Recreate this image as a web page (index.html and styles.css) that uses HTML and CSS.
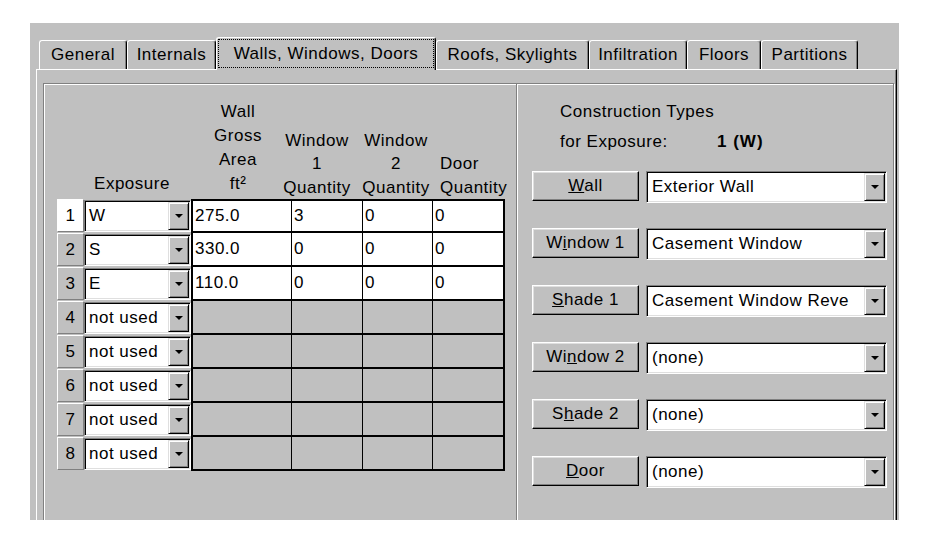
FILE: index.html
```html
<!DOCTYPE html>
<html lang="en">
<head>
  <meta charset="UTF-8" />
  <title>Walls, Windows, Doors</title>
  <link rel="stylesheet" href="styles.css">
</head>
<body>

  <div class="dialog">
    <div class="tabs">
      <div class="tab w-general">General</div>
      <div class="tab w-internals">Internals</div>
      <div class="tab active w-walls"><span class="focus">Walls, Windows, Doors</span></div>
      <div class="tab w-roofs">Roofs, Skylights</div>
      <div class="tab w-infil">Infiltration</div>
      <div class="tab w-floors">Floors</div>
      <div class="tab w-parts">Partitions</div>
    </div>

    <div class="panel">
      <div class="frames">

        <div class="left">
          <div class="heads">
            <div class="h-exp">Exposure</div>
            <div class="h-wall">Wall<br>Gross<br>Area<br>ft²</div>
            <div class="h-win">Window<br>1<br>Quantity</div>
            <div class="h-win h-win2">Window<br>2<br>Quantity</div>
            <div class="h-door">Door<br>Quantity</div>
          </div>

          <div class="grid">
            <div class="row first">
              <div class="num current">1</div>
              <div class="combo small"><span class="val">W</span><span class="drop"></span></div>
              <div class="cell c-wall">275.0</div>
              <div class="cell c-q1">3</div>
              <div class="cell c-q2">0</div>
              <div class="cell c-door">0</div>
            </div>
            <div class="row">
              <div class="num">2</div>
              <div class="combo small"><span class="val">S</span><span class="drop"></span></div>
              <div class="cell c-wall">330.0</div>
              <div class="cell c-q1">0</div>
              <div class="cell c-q2">0</div>
              <div class="cell c-door">0</div>
            </div>
            <div class="row">
              <div class="num">3</div>
              <div class="combo small"><span class="val">E</span><span class="drop"></span></div>
              <div class="cell c-wall">110.0</div>
              <div class="cell c-q1">0</div>
              <div class="cell c-q2">0</div>
              <div class="cell c-door">0</div>
            </div>
            <div class="row">
              <div class="num">4</div>
              <div class="combo small"><span class="val">not used</span><span class="drop"></span></div>
              <div class="cell off c-wall"></div>
              <div class="cell off c-q1"></div>
              <div class="cell off c-q2"></div>
              <div class="cell off c-door"></div>
            </div>
            <div class="row">
              <div class="num">5</div>
              <div class="combo small"><span class="val">not used</span><span class="drop"></span></div>
              <div class="cell off c-wall"></div>
              <div class="cell off c-q1"></div>
              <div class="cell off c-q2"></div>
              <div class="cell off c-door"></div>
            </div>
            <div class="row">
              <div class="num">6</div>
              <div class="combo small"><span class="val">not used</span><span class="drop"></span></div>
              <div class="cell off c-wall"></div>
              <div class="cell off c-q1"></div>
              <div class="cell off c-q2"></div>
              <div class="cell off c-door"></div>
            </div>
            <div class="row">
              <div class="num">7</div>
              <div class="combo small"><span class="val">not used</span><span class="drop"></span></div>
              <div class="cell off c-wall"></div>
              <div class="cell off c-q1"></div>
              <div class="cell off c-q2"></div>
              <div class="cell off c-door"></div>
            </div>
            <div class="row">
              <div class="num">8</div>
              <div class="combo small"><span class="val">not used</span><span class="drop"></span></div>
              <div class="cell off c-wall"></div>
              <div class="cell off c-q1"></div>
              <div class="cell off c-q2"></div>
              <div class="cell off c-door"></div>
            </div>
          </div>
        </div>

        <div class="right">
          <div class="ct">
            <div>Construction Types</div>
            <div><span class="ct-label">for Exposure:</span><b class="ct-sel">1 (W)</b></div>
          </div>

          <div class="crow">
            <div class="btn"><span><u>W</u>all</span></div>
            <div class="combo big"><span class="val">Exterior Wall</span><span class="drop"></span></div>
          </div>
          <div class="crow">
            <div class="btn"><span>W<u>i</u>ndow 1</span></div>
            <div class="combo big"><span class="val">Casement Window</span><span class="drop"></span></div>
          </div>
          <div class="crow">
            <div class="btn"><span><u>S</u>hade 1</span></div>
            <div class="combo big"><span class="val">Casement Window Reve</span><span class="drop"></span></div>
          </div>
          <div class="crow">
            <div class="btn"><span>Wi<u>n</u>dow 2</span></div>
            <div class="combo big"><span class="val">(none)</span><span class="drop"></span></div>
          </div>
          <div class="crow">
            <div class="btn"><span>S<u>h</u>ade 2</span></div>
            <div class="combo big"><span class="val">(none)</span><span class="drop"></span></div>
          </div>
          <div class="crow">
            <div class="btn"><span><u>D</u>oor</span></div>
            <div class="combo big"><span class="val">(none)</span><span class="drop"></span></div>
          </div>
        </div>

      </div>
    </div>
  </div>

</body>
</html>
```

FILE: styles.css
```css
body {
  margin: 0;
  background: #ffffff;
  font-family: 'Liberation Sans', Arial, sans-serif;
  font-size: 17px;
  letter-spacing: 0.5px;
  color: #000;
}

.dialog {
  margin: 23px 0 0 30px;
  width: 869px;
  height: 497px;
  box-sizing: border-box;
  padding: 14px 0 0 6px;
  background: #c0c0c0;
  overflow: hidden;
}

/* tab strip */

.tabs {
  display: flex;
  align-items: flex-end;
  height: 32px;
  margin-left: 3px;
}

.tab {
  height: 29px;
  box-sizing: border-box;
  display: flex;
  align-items: center;
  justify-content: center;
  white-space: nowrap;
  background: #c0c0c0;
  border-top: 1px solid #fff;
  border-left: 1px solid #fff;
  border-right: 1px solid #000;
  box-shadow: inset -1px 0 0 #808080;
  border-radius: 3px 3px 0 0;
}

.tab.active {
  height: 33px;
  margin-bottom: -1px;
  padding: 1px 1px 2px;
  align-items: stretch;
  position: relative;
  z-index: 1;
}

.focus {
  flex: 1;
  display: flex;
  align-items: center;
  justify-content: center;
  border: 1px dotted #000;
}

.w-general { width: 88px; }
.w-internals { width: 89px; }
.w-walls { width: 220px; }
.w-roofs { width: 153px; }
.w-infil { width: 98px; }
.w-floors { width: 74px; }
.w-parts { width: 97px; }

/* page body */

.panel {
  width: 861px;
  height: 600px;
  box-sizing: border-box;
  padding: 13px 0 0 6px;
  border-top: 1px solid #fff;
  border-left: 1px solid #fff;
  border-right: 1px solid #000;
  box-shadow: inset -1px 0 0 #808080;
}

.frames {
  display: flex;
  width: 851px;
  height: 500px;
  box-sizing: border-box;
  border: 1px solid #808080;
  box-shadow: inset 1px 1px 0 #fff, 1px 1px 0 #fff;
}

.left {
  width: 472px;
}

.right {
  flex: 1;
  border-left: 1px solid #808080;
  box-shadow: inset 1px 0 0 #fff;
}

/* exposure table */

.heads {
  display: flex;
  align-items: flex-end;
  height: 99px;
  margin: 16px 0 0 13px;
}

.heads > div {
  box-sizing: border-box;
  text-align: center;
  line-height: 23.5px;
}

.h-exp {
  width: 96px;
  margin-left: 27px;
  padding-bottom: 4px;
}

.h-wall {
  width: 76px;
  margin-left: 20px;
  padding-bottom: 3px;
  line-height: 24px !important;
}

.h-win {
  width: 82px;
}

.h-win2 {
  width: 76px;
}

.heads .h-door {
  width: 76px;
  padding-left: 6px;
  text-align: left;
}

.grid {
  margin-left: 13px;
}

.row {
  display: flex;
  height: 34px;
}

.num {
  width: 27px;
  height: 33px;
  box-sizing: border-box;
  display: flex;
  align-items: center;
  justify-content: center;
  border-top: 1px solid #fff;
  border-left: 1px solid #fff;
  border-right: 1px solid #808080;
  border-bottom: 1px solid #808080;
}

.num.current {
  background: #fff;
}

.combo {
  display: flex;
  box-sizing: border-box;
  padding: 1px;
  background: #fff;
  border: 1px solid;
  border-color: #808080 #fff #fff #808080;
  box-shadow: inset 1px 1px 0 #000, inset -1px -1px 0 #dfdfdf;
}

.combo .val {
  flex: 1;
  display: flex;
  align-items: center;
  white-space: nowrap;
  overflow: hidden;
}

.combo.small {
  width: 107px;
  height: 32px;
  margin-top: 1px;
}

.combo.small .val {
  padding-left: 3px;
}

.combo.big {
  width: 241px;
  height: 32px;
  margin-left: 7px;
}

.combo.big .val {
  padding-left: 4px;
}

.drop {
  width: 21px;
  box-sizing: border-box;
  display: flex;
  align-items: center;
  justify-content: center;
  background: #c0c0c0;
  border: 1px solid;
  border-color: #dfdfdf #000 #000 #dfdfdf;
  box-shadow: inset 1px 1px 0 #fff, inset -1px -1px 0 #808080;
}

.drop::after {
  content: "";
  border-left: 4px solid transparent;
  border-right: 4px solid transparent;
  border-top: 4px solid #000;
}

.cell {
  height: 34px;
  box-sizing: border-box;
  display: flex;
  align-items: center;
  padding-left: 2px;
  background: #fff;
  border-right: 1px solid #000;
  border-bottom: 2px solid #000;
}

.cell.off {
  background: #c0c0c0;
}

.row.first .cell {
  border-top: 2px solid #000;
}

.c-wall {
  width: 101px;
  border-left: 2px solid #000;
}

.c-q1 { width: 71px; }
.c-q2 { width: 70px; }

.c-door {
  width: 72px;
  border-right-width: 2px !important;
}

/* construction types */

.ct {
  margin: 13px 0 0 43px;
  line-height: 30px;
}

.ct-label {
  display: inline-block;
  width: 157px;
}

.ct-sel {
  letter-spacing: 1px;
}

.crow {
  display: flex;
  height: 32px;
  margin: 0 0 25px 15px;
}

.ct + .crow {
  margin-top: 14px;
}

.btn {
  width: 107px;
  height: 30px;
  box-sizing: border-box;
  display: flex;
  align-items: center;
  justify-content: center;
  border: 1px solid;
  border-color: #fff #000 #000 #fff;
  box-shadow: inset -1px -1px 0 #808080, inset 1px 1px 0 #dfdfdf;
}
```
